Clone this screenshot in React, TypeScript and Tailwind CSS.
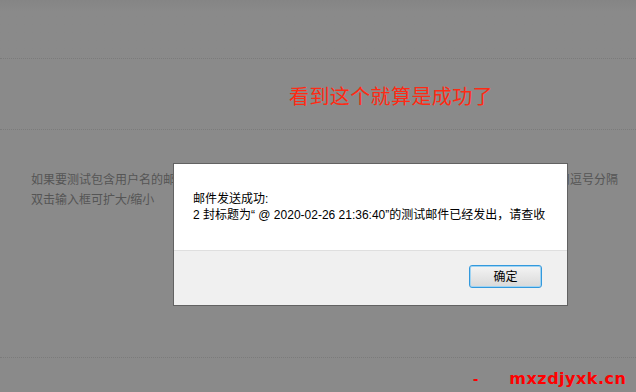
import React from "react";

export default function App() {
  const font = { fontFamily: '"Liberation Sans", "Noto Sans CJK SC", sans-serif' };
  return (
    <div className="relative h-[392px] w-full overflow-hidden bg-[#8a8a8a]" style={font}>
      <div className="h-[58px] bg-gradient-to-b from-[#858585] to-[#8a8a8a] to-[12px]" />
      <div className="border-t border-dotted border-[#7b7b7b]" />
      <div className="h-[70px] pl-[289px] pt-[28px]">
        <div className="text-[20px] leading-[20px] tracking-[0.4px] text-[#ff2a14]">看到这个就算是成功了</div>
      </div>
      <div className="border-t border-dotted border-[#7b7b7b]" />
      <div className="h-[227px] pl-[31px] pt-[40px] text-[12px] leading-[20px] text-[#555555]">
        <div className="flex w-[587px] justify-between whitespace-nowrap">
          <span>如果要测试包含用户名的邮件地址，请在下方输入</span>
          <span>多个邮箱请用逗号分隔</span>
        </div>
        <div>双击输入框可扩大/缩小</div>
      </div>
      <div className="border-t border-dotted border-[#7b7b7b]" />
      <div className="flex items-center pt-[12px] text-[16px] font-bold leading-[18px] text-[#ff0000]">
        <span className="ml-[473px]">-</span>
        <span className="ml-[31px] tracking-[0.5px]" style={{ fontFamily: '"DejaVu Sans", sans-serif' }}>mxzdjyxk.cn</span>
      </div>

      <div className="absolute left-[173px] top-[163px] flex h-[143px] w-[395px] flex-col border border-[#626262] bg-white">
        <div className="h-[86px] pl-[19px] pt-[27px] text-[12px] leading-[16px] text-black">
          <div>邮件发送成功:</div>
          <div>2 封标题为“ @ 2020-02-26 21:36:40”的测试邮件已经发出，请查收</div>
        </div>
        <div className="flex flex-1 justify-end border-t border-[#dfdfdf] bg-[#f0f0f0] pr-[25px] pt-[14px]">
          <button className="h-[23px] w-[73px] rounded-[3px] border border-[#3399dd] bg-gradient-to-b from-[#f4f4f4] to-[#d9d9d9] text-[12px] leading-[20px] text-black shadow-[inset_0_0_0_1px_#9fd3f2]">
            确定
          </button>
        </div>
      </div>
    </div>
  );
}
